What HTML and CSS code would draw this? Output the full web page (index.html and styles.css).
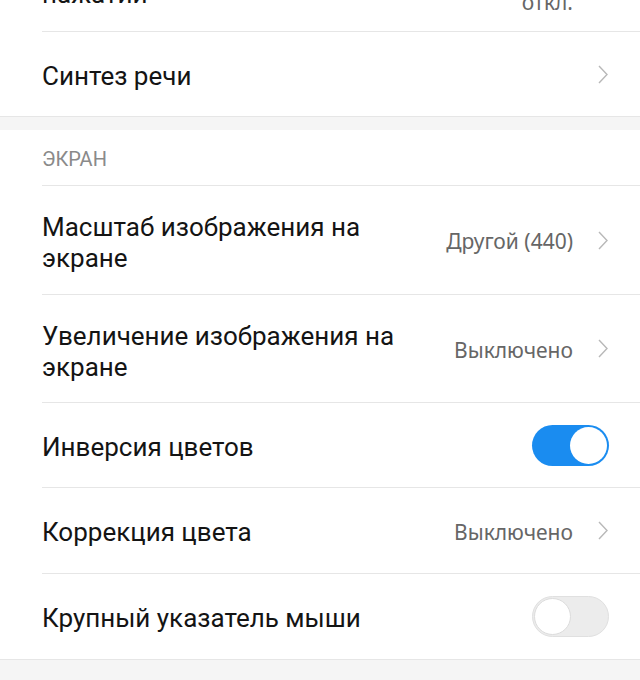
FILE: index.html
```html
<!DOCTYPE html>
<html lang="ru">
<head>
<meta charset="utf-8">
<link rel="stylesheet" href="styles.css">
</head>
<body>
<div class="screen">
  <div class="group">
    <div class="row row-partial">
      <div class="label">нажатий</div>
      <div class="value value-partial">откл.</div>
    </div>
    <div class="row row-last">
      <div class="label">Синтез речи</div>
      <svg class="chev" viewBox="0 0 10 19"><path d="M1 1 L9 9.5 L1 18" /></svg>
    </div>
  </div>
  <div class="band"></div>
  <div class="group">
    <div class="header">ЭКРАН</div>
    <div class="row tall">
      <div class="label">Масштаб изображения на<br>экране</div>
      <div class="right"><span class="value">Другой (440)</span><svg class="chev" viewBox="0 0 10 19"><path d="M1 1 L9 9.5 L1 18" /></svg></div>
    </div>
    <div class="row tall short">
      <div class="label">Увеличение изображения на<br>экране</div>
      <div class="right"><span class="value">Выключено</span><svg class="chev" viewBox="0 0 10 19"><path d="M1 1 L9 9.5 L1 18" /></svg></div>
    </div>
    <div class="row">
      <div class="label">Инверсия цветов</div>
      <div class="toggle on"><span class="knob"></span></div>
    </div>
    <div class="row row-wide">
      <div class="label">Коррекция цвета</div>
      <div class="right"><span class="value">Выключено</span><svg class="chev" viewBox="0 0 10 19"><path d="M1 1 L9 9.5 L1 18" /></svg></div>
    </div>
    <div class="row row-end">
      <div class="label">Крупный указатель мыши</div>
      <div class="toggle off"><span class="knob"></span></div>
    </div>
  </div>
  <div class="band band-bottom"></div>
</div>
</body>
</html>
```

FILE: styles.css
```css
html, body {
  margin: 0;
  padding: 0;
  background: #ffffff;
}
.screen {
  width: 640px;
  height: 680px;
  overflow: hidden;
  font-family: Roboto, "Noto Sans", sans-serif;
}
.group {
  background: #ffffff;
}
.row {
  box-sizing: border-box;
  margin-left: 42px;
  padding: 0 32px 0 0;
  min-height: 85px;
  border-bottom: 1px solid #e6e6e6;
  display: flex;
  align-items: center;
  justify-content: space-between;
}
.row.tall {
  min-height: 109px;
}
.row.tall.short {
  min-height: 108px;
}
.row.row-wide {
  min-height: 86px;
}
.row.row-last {
  border-bottom: none;
  min-height: 84px;
}
.row.row-end {
  border-bottom: none;
  min-height: 85px;
}
.row.row-partial {
  min-height: 0;
  height: 32px;
  padding: 0 67px 0 0;
  align-items: flex-start;
  overflow: hidden;
}
.row-partial .label {
  margin-top: -21px;
}
.row-partial .value-partial {
  margin-top: -10px;
  line-height: 24px;
}
.label {
  font-size: 26px;
  line-height: 31px;
  color: #141414;
  margin-top: 4px;
}
.row.tall .label {
  margin-top: 6px;
}
.right {
  display: flex;
  align-items: center;
  gap: 25px;
}
.value {
  font-family: "Noto Sans", "Open Sans", sans-serif;
  font-size: 21px;
  color: #666666;
  margin-top: 2px;
}
.chev {
  width: 10px;
  height: 19px;
  flex: none;
}
.chev path {
  fill: none;
  stroke: #b8b8b8;
  stroke-width: 1.4;
}
.band {
  height: 13px;
  background: #f5f5f5;
  border-top: 1px solid #e6e6e6;
}
.band-bottom {
  height: 30px;
}
.header {
  margin-left: 42px;
  height: 56px;
  box-sizing: border-box;
  padding-top: 17px;
  font-size: 20px;
  line-height: 24px;
  color: #8a8a8a;
  border-bottom: 1px solid #e6e6e6;
}
.toggle {
  width: 77px;
  height: 41px;
  border-radius: 21px;
  box-sizing: border-box;
  position: relative;
  flex: none;
}
.toggle.on {
  background: #1a8cf0;
  margin-right: -1px;
}
.toggle.off {
  background: #ececec;
  border: 1px solid #e0e0e0;
  margin-right: -1px;
}
.knob {
  position: absolute;
  top: 2px;
  width: 37px;
  height: 37px;
  border-radius: 50%;
  background: #ffffff;
  box-sizing: border-box;
}
.toggle.on .knob {
  right: 2px;
}
.toggle.off .knob {
  left: 1px;
  top: 1px;
  border: 1.5px solid #dcdcdc;
}
```
